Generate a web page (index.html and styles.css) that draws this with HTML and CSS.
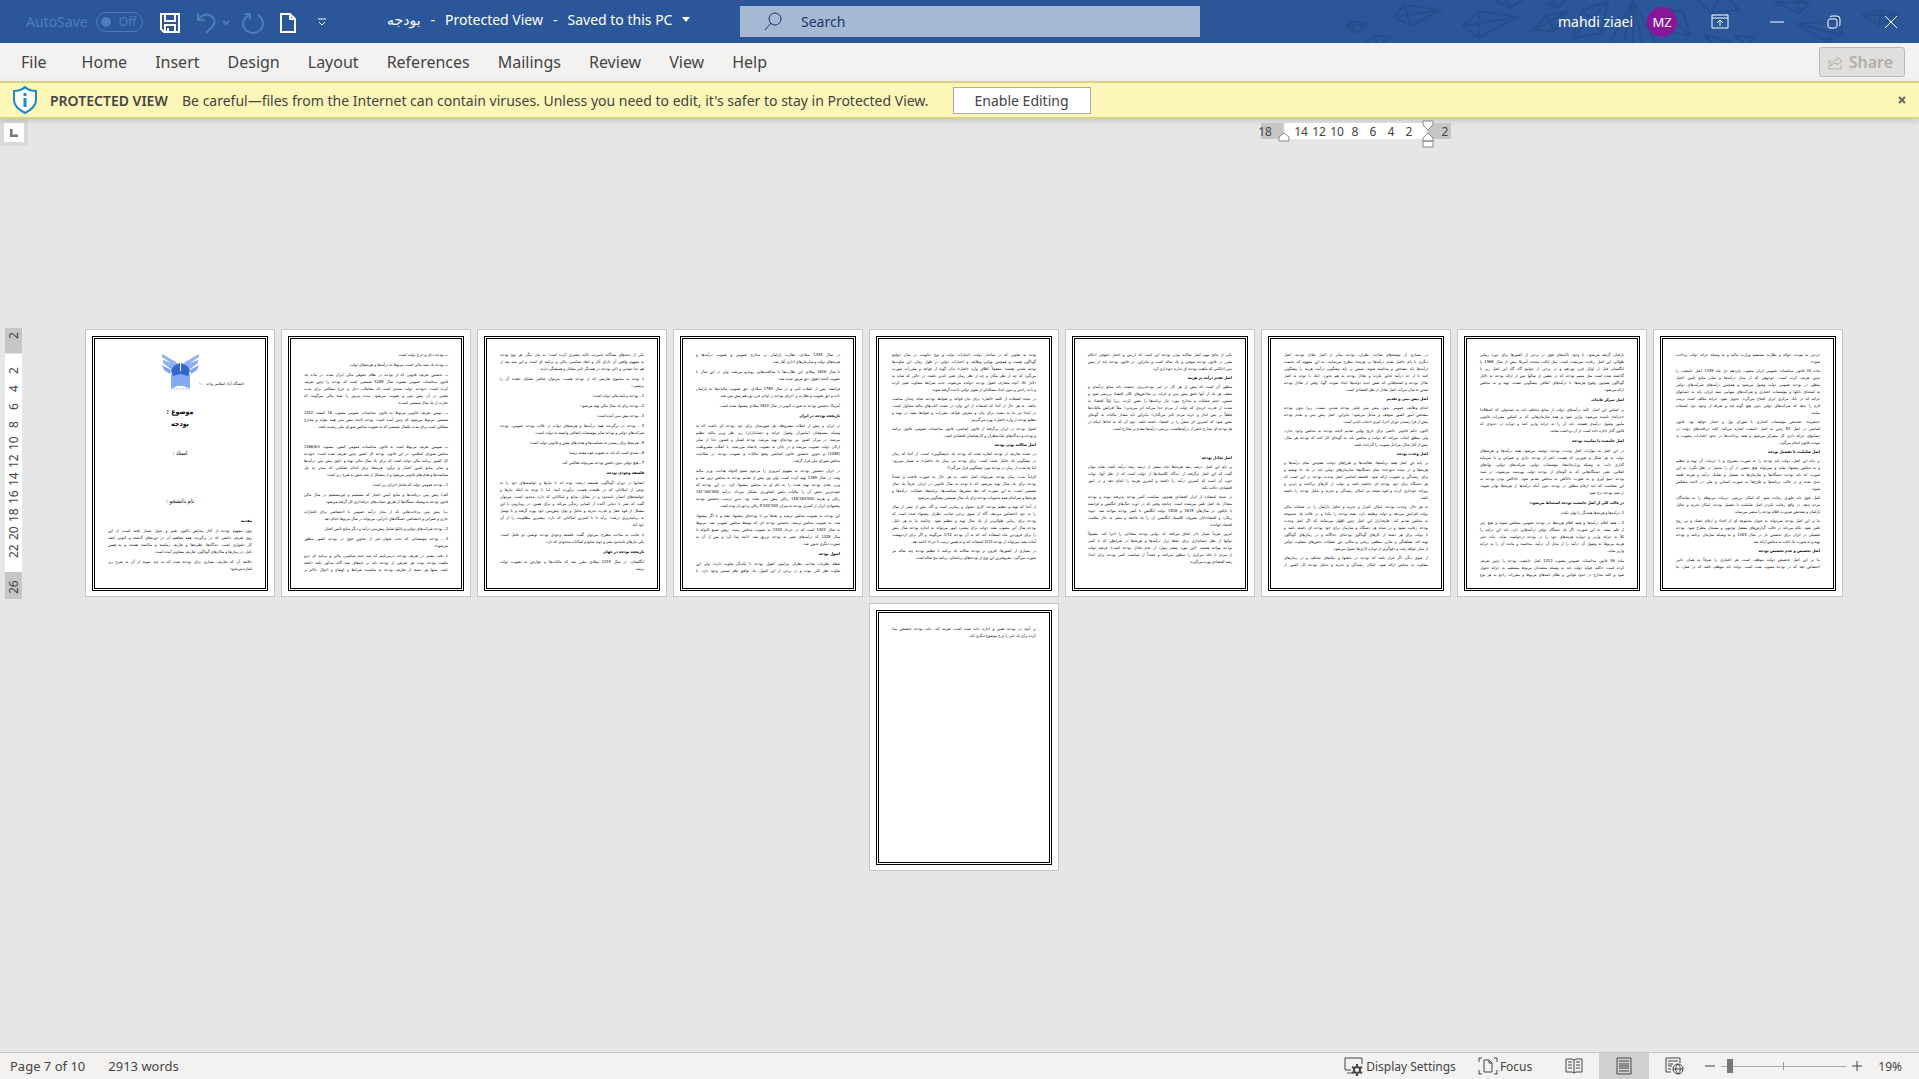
FILE: index.html
```html
<!DOCTYPE html>
<html lang="en">
<head>
<meta charset="utf-8">
<title>بودجه - Protected View</title>
<link rel="stylesheet" href="styles.css">
</head>
<body>
<header class="titlebar">
  <svg class="art" width="560" height="43" viewBox="0 0 560 43" aria-hidden="true">
    <path d="M6 27L11 21L29 24L15 33ZM11 21L15 33M6 27L29 24M54 17L64 5L101 10L71 26ZM64 5L71 26M54 17L101 10M123 26L139 11L177 17L139 38ZM139 11L139 38M123 26L177 17M26 43L34 35L52 37L41 43M34 35L37 43M154 0L170 8L183 0M166 0L170 8M207 3L217 8L226 0M212 0L217 8M193 30L206 16L227 12L214 31ZM206 16L214 31M193 30L227 12M232 38L243 10L268 1L262 33ZM243 10L262 33M232 38L268 1M270 43L293 0L316 43M284 43L293 0L302 43M293 0V43M320 8L343 12L350 36L325 30ZM320 8L350 36M357 0L372 13L400 10L389 0M372 13L378 0M363 34L392 43M363 34L372 43M394 36L414 37L408 43M394 36L404 43M434 2L459 13L469 3L455 0M434 2L469 3M457 0L459 13M457 24L501 21L502 35L486 41ZM501 21L486 41M457 24L502 35M523 15L541 10L559 15L539 25ZM541 10L539 25M523 15H559"/>
  </svg>
  <div class="quick">
    <label class="autosave"><span>AutoSave</span>
      <button class="toggle" type="button" disabled><i></i>Off</button></label>
    <button class="icon save" type="button" aria-label="Save"><svg width="20" height="20" viewBox="0 0 20 20"><path d="M1 1H19V19H4L1 16ZM5 1V8H15V1M5 19V12H15V19M8 19V15"/></svg></button>
    <button class="icon dim undo" type="button" aria-label="Undo"><svg width="34" height="22" viewBox="0 0 34 22"><path d="M2 1V8H9M2 8C6 3 10 2 13 3C19 5 20 11 16 15L10 21M27 9L30 12L33 9"/></svg></button>
    <button class="icon dim redo" type="button" aria-label="Repeat"><svg width="22" height="22" viewBox="0 0 22 22"><path d="M2 2H8V8M8 3C3 5 1 8 1 12A10 9 0 0 0 21 12C21 8 19 5 16 3"/></svg></button>
    <button class="icon new" type="button" aria-label="New"><svg width="16" height="20" viewBox="0 0 16 20"><path d="M1 1H10L15 6V19H1ZM10 1V6H15"/></svg></button>
    <button class="icon more" type="button" aria-label="Customize toolbar"><svg width="10" height="9" viewBox="0 0 10 9"><path d="M1 1H9M2 4L5 7L8 4"/></svg></button>
  </div>
  <div class="doc"><bdi>بودجه</bdi><span>-</span><span>Protected View</span><span>-</span><span>Saved to this PC</span><svg width="8" height="5" viewBox="0 0 8 5"><path d="M0 0H8L4 5Z"/></svg></div>
  <label class="search"><svg width="18" height="19" viewBox="0 0 18 19"><circle cx="11" cy="7" r="6"/><path d="M7 11L1 18"/></svg><input type="text" placeholder="Search" aria-label="Search"></label>
  <div class="account"><span>mahdi ziaei</span><span class="avatar">MZ</span></div>
  <div class="window">
    <button class="icon" type="button" aria-label="Ribbon display options"><svg width="18" height="15" viewBox="0 0 18 15"><path d="M1 1H17V14H1ZM1 4H17M9 12V6M6 9L9 6L12 9"/></svg></button>
    <button class="icon" type="button" aria-label="Minimize"><svg width="14" height="14" viewBox="0 0 14 14"><path d="M0 7H14"/></svg></button>
    <button class="icon" type="button" aria-label="Restore"><svg width="14" height="14" viewBox="0 0 14 14"><rect x="1" y="4" width="9" height="9" rx="2"/><path d="M3 2Q4 1 5 1H10Q13 1 13 4V9Q13 11 12 11"/></svg></button>
    <button class="icon" type="button" aria-label="Close"><svg width="14" height="14" viewBox="0 0 14 14"><path d="M1 1L13 13M13 1L1 13"/></svg></button>
  </div>
</header>
<nav class="tabs">
  <button type="button">File</button><button type="button">Home</button><button type="button">Insert</button><button type="button">Design</button><button type="button">Layout</button><button type="button">References</button><button type="button">Mailings</button><button type="button">Review</button><button type="button">View</button><button type="button">Help</button>
  <button class="share" type="button" disabled><svg width="15" height="15" viewBox="0 0 15 15"><path d="M3 6H1V14H13V10M3 11C3 7 6 5 9 5V2L14 6L9 10V8C6 8 4 9 3 11Z"/></svg>Share</button>
</nav>
<section class="notice">
  <svg class="shield" width="24" height="28" viewBox="0 0 24 28"><path class="edge" d="M12 1C9 4 5 5 1 5V14C1 20 6 24 12 27C18 24 23 20 23 14V5C19 5 15 4 12 1Z"/><path class="info" d="M12 7V10M12 12V21"/></svg>
  <strong>PROTECTED VIEW</strong>
  <span>Be careful—files from the Internet can contain viruses. Unless you need to edit, it's safer to stay in Protected View.</span>
  <button class="enable" type="button">Enable Editing</button>
  <button class="dismiss" type="button" aria-label="Close message"><svg width="8" height="8" viewBox="0 0 8 8"><path d="M1 1L7 7M7 1L1 7"/></svg></button>
</section>
<main class="workspace">
  <div class="topstrip">
    <button class="tabstop" type="button" aria-label="Tab stop"><svg width="8" height="8" viewBox="0 0 8 8"><path d="M1 0V7H8"/></svg></button>
    <div class="slots">
      <div class="hruler">
        <span>18</span><span></span><span>14</span><span>12</span><span>10</span><span>8</span><span>6</span><span>4</span><span>2</span><span></span><span>2</span>
        <svg class="mark left" width="12" height="10" viewBox="0 0 12 10"><path d="M1 9V5L6 1L11 5V9Z"/></svg>
        <svg class="mark right" width="12" height="28" viewBox="0 0 12 28"><path d="M1 1H11V5L6 10L1 5ZM6 13L11 18V21H1V18ZM1 21H11V27H1Z"/></svg>
      </div>
    </div>
  </div>
  <div class="stage">
    <div class="vruler"><span>2</span><span></span><span>2</span><span>4</span><span>6</span><span>8</span><span>10</span><span>12</span><span>14</span><span>16</span><span>18</span><span>20</span><span>22</span><span></span><span>26</span></div>
    <div class="pages">
      <article class="page cover" dir="rtl"><div class="frame">
        <div class="crest">
          <svg width="37" height="37" viewBox="0 0 37 37"><path fill="#8fb0f5" d="M0 0L14 8L18 14L10 16L1 9V6L9 9L0 3ZM37 0L23 8L19 14L27 16L36 9V6L28 9L37 3Z"/><path fill="#7fa4f3" d="M0 11L9 16L8 20L2 16ZM37 11L28 16L29 20L35 16Z"/><path fill="#86a9f4" d="M9 20H28V35L22 32H15L9 35Z"/><path fill="#3566d0" d="M9 17C11 11 15 10 18 9H19C22 10 26 11 28 17L26 22L19 20H18L11 22Z"/><path fill="#fff" d="M18 9H19V17H18Z"/><path stroke="#a9c0ee" d="M11 35H27" stroke-dasharray="2 1"/></svg>
          <span>دانشگاه آزاد اسلامی واحد ۱۰۰</span>
        </div>
        <h1>موضوع :</h1><h1>بودجه</h1><h2>استاد :</h2><h2 class="student">نام دانشجو :</h2>
        <h3>مقدمه</h3>
        <p><span>چون مفهوم بودجه از آغاز پیدایش تاکنون تغییر و تحول بسیار یافته است، از این</span><span>روی تعریف جامعی که در برگیرنده همه مفاهیم آن در دوره‌های گذشته و کنونی باشد</span><span>کار دشواری است. دیدگاه‌ها، نظریه‌ها و تعاریف زمانمند و مکانمند هستند و به همین</span><span>دلیل، در زمان‌ها و مکان‌های گوناگون، تعاریف متفاوتی آمده است.</span></p>
        <p><span>خلاصه آن که تعاریف بسیاری برای بودجه شده که به چند نمونه از آن به شرح زیر</span><span>اشاره می‌شود:</span></p>
      </div></article>

      <article class="page" dir="rtl"><div class="frame">
        <p><span>ـــ بودجه دخل و خرج دولت است.</span></p>
        <p><span>ـــ بودجه یك سند مالی است، مربوط به درآمدها و هزینه‌های دولت.</span></p>
        <p><span>ـــ نخستین تعریف قانونی که از بودجه در نظام حقوقی مالی ایران شده، در ماده یك</span><span>قانون محاسبات عمومی مصوب سال 1289 شمسی است که بودجه را چنین تعریف</span><span>کرده است: «بودجه دولت سندی است که معاملات دخل و خرج مملکتی برای مدت</span><span>معینی در آن پیش بینی و تصویب می‌شود. مدت مزبور را سنه مالی می‌گویند که</span><span>عبارت از یك سال شمسی است».</span></p>
        <p><span>ـــ دومین تعریف قانونی مربوط به قانون محاسبات عمومی مصوب 16 اسفند 1312</span><span>شمسی مربوط می‌شود که چنین آمده است: بودجه لایحه پیش بینی همه عواید و مخارج</span><span>مملکتی است برای مدت یکسال شمسی که به تصویب مجلس شورای ملی رسیده باشد.</span></p>
        <p class="gap"><span>ـــ سومین تعریف مربوط است به قانون محاسبات عمومی کشور، مصوب 1366/6/1</span><span>مجلس شورای اسلامی. در این قانون، بودجه کل کشور چنین تعریف شده است: «بودجه</span><span>کل کشور برنامه مالی دولت است که برای یك سال مالی تهیه و حاوی پیش بینی درآمدها</span><span>و سایر منابع تأمین اعتبار و برآورد هزینه‌ها برای انجام عملیاتی که منجر به نیل</span><span>سیاست‌ها و هدف‌های قانونی می‌شود و از متشکل از سه بخش به شرح زیر است:</span></p>
        <p><span>1 ـ بودجه عمومی دولت که شامل اجزای زیر است:</span></p>
        <p><span>الف) پیش بینی دریافت‌ها و منابع تأمین اعتبار که مستقیم و غیرمستقیم در سال مالی</span><span>قانون بودجه به وسیله دستگاه‌ها از طریق حساب‌های خزانه‌داری کل گرفته می‌شود.</span></p>
        <p><span>ب) پیش بینی پرداخت‌هایی که از محل درآمد عمومی یا اختصاصی برای اعتبارات</span><span>جاری و عمرانی و اختصاصی دستگاه‌های اجرایی، می‌تواند در سال مربوط انجام دهد.</span></p>
        <p><span>2 ـ بودجه شرکت‌های دولتی و بانکها شامل پیش‌بینی درآمد و دیگر منابع تأمین اعتبار.</span></p>
        <p><span>3 ـ بودجه مؤسساتی که تحت عنوان غیر از عناوین فوق در بودجه کشور منظور</span><span>می‌شود».</span></p>
        <p class="full"><span>با دقت بیشتر در تعریف بودجه، درمی‌یابیم که سه جنبه سیاسی، مالی و برنامه ای جزو</span><span>ماهیت بودجه بوده، هر تعریفی از بودجه باید بر پایه‌های سه گانه مذکور تکیه داشته</span><span>باشد. منتها هر دسته از تعاریف بودجه به مناسبت شرایط و اوضاع و احوال حاکم بر</span></p>
      </div></article>

      <article class="page" dir="rtl"><div class="frame">
        <p><span>یکی از جنبه‌های سه‌گانه نامبرده، تاکید بیشتری کرده است؛ به بیان دیگر، هر نوع بودجه</span><span>به مفهوم واقعی آن دارای آثار و ابعاد سیاسی، مالی و برنامه ای است و این سه بعد از</span><span>هم جدا نشدنی و ذاتی بودجه، در همدیگر تأثیر متقابل و همیشگی دارند.</span></p>
        <p><span>با توجه به مجموع تعاریفی که از بودجه هست، می‌توان عناصر تشکیل دهنده آن را</span><span>برشمرد:</span></p>
        <p><span>1 ـ بودجه برنامه مالی دولت است؛</span></p>
        <p><span>2 ـ بودجه برای یك سال مالی تهیه می‌شود؛</span></p>
        <p><span>3 ـ بودجه پیش بینی آینده است؛</span></p>
        <p><span>4 ـ بودجه در برگیرنده همه درآمدها و هزینه‌های دولت در قالب بودجه عمومی، بودجه</span><span>شرکت‌های دولتی و بودجه سایر مؤسسات انتفاعی وابسته به دولت است؛</span></p>
        <p><span>5 ـ هزینه‌ها برای رسیدن به سیاست‌ها و هدف‌های معین و قانونی دولت است؛</span></p>
        <p><span>6 ـ سندی است که باید به تصویب قوه مقننه برسد؛</span></p>
        <p><span>7 ـ هیچ دولتی بدون داشتن بودجه نمی‌تواند فعالیتی کند.</span></p>
        <h3>فلسفه وجودی بودجه</h3>
        <p><span>انسانها در دوران گوناگون، همیشه درصدد بوده اند تا نیازها و خواسته‌های خود را به</span><span>نوعی از امکاناتی که در طبیعت هست، برآورده کنند؛ اما با توجه به اینکه نیازها و</span><span>خواسته‌های انسان نامحدود و در مقابل، منابع و امکاناتی که دارد، محدود است، می‌توان</span><span>گفت که بشر با دنیایی آکنده از کمیابی زندگی می‌کند و برای همین، در رویارویی با این</span><span>مشکل از قوه عقل و قدرت تجزیه و تحلیل و توان پیش‌بینی خود بهره گرفته و با توسل</span><span>به برنامه‌ریزی درصدد برآید تا با کمترین امکاناتی که دارد، بیشترین مطلوبیت را از آن</span><span>خود کند.</span></p>
        <p><span>با عنایت به مباحث مطرح، می‌توان گفت: فلسفه وجودی بودجه نویسی دو عامل است:</span><span>یکی نیازهای نامحدود بشر و دوم، منابع و امکانات محدودی که دارد.</span></p>
        <h3>تاریخچه بودجه در جهان</h3>
        <p><span>انگلستان: در سال 1215 میلادی مقرر شد که مالیات‌ها و عوارض به تصویب دولت</span><span>برسد.</span></p>
      </div></article>

      <article class="page" dir="rtl"><div class="frame">
        <p><span>در سال 1344 میلادی، نظارت پارلمان بر مخارج عمومی و تصویب درآمدها و</span><span>هزینه‌های دولت و سازمان‌های اداری آغاز شد.</span></p>
        <p><span>تا سال 1616 میلادی این نظارت‌ها با مخالفت‌هایی روبه‌رو می‌شد، ولی در این سال با</span><span>تصویب لایحه حقوق، حق مزبور تثبیت شد.</span></p>
        <p><span>فرانسه: پس از انقلاب کبیر و در سال 1789 میلادی، حق تصویب مالیات‌ها به پارلمان</span><span>داده و حق تصویب و نظارت بر اجرای بودجه در اواخر قرن نوزدهم پیش بینی شد.</span></p>
        <p><span>آمریکا: نخستین بودجه به صورت کنونی در سال 1814 میلادی پیشنهاد شده است.</span></p>
        <h3>تاریخچه بودجه در ایران</h3>
        <p><span>در ایران و پیش از انقلاب مشروطه، هر شهرستان برای خود بودجه ای داشت که به</span><span>وسیله مستوفیان (ماموران وصول خزانه و حسابداران) زیر نظر وزیر مالیه تنظیم</span><span>می‌شد. در مرکز کشور نیز بودجه‌ای تهیه می‌شد. بودجه لشکر و قشون جدا از سایر</span><span>ارکان دولت تصویب می‌شد و در پایان به تصویب پادشاه می‌رسید. با انقلاب مشروطیت</span><span>(1285) و تدوین نخستین قانون اساسی وضع مالیات و تصویب بودجه در صلاحیت</span><span>مجلس شورای ملی قرار گرفت.</span></p>
        <p><span>در ایران نخستین بودجه به مفهوم امروزی را مرحوم صنیع الدوله هدایت، وزیر مالیه</span><span>وقت در سال 1289 تهیه کرده است، ولی وی پیش از تقدیم بودجه به مجلس ترور شد و</span><span>وزیر بعدی بودجه تهیه شده را به نام او به مجلس پیشنهاد کرد. در این بودجه که</span><span>عمده‌ترین بخش آن را مالیات بخش کشاورزی تشکیل می‌داد، درآمد 141٬160٬000</span><span>ریالی و هزینه 146٬180٬000 ریالی پیش بینی شده بود. بدین ترتیب، نخستین بودجه</span><span>پیشنهادی ایران از کسری بودجه به میزان 5٬020٬000 ریالی برخوردار بوده است.</span></p>
        <p><span>این بودجه به تصویب مجلس نرسید و بعدها نیز یا بودجه‌ای پیشنهاد نشد و یا اگر پیشنهاد</span><span>شد، به تصویب مجلس نرسید. نخستین بودجه ای که توسط مجلس تصویب شد، مربوط</span><span>به سال 1302 است که در خرداد 1302 به تصویب مجلس رسید. روش صنیع الدوله تا</span><span>سال 1328 که درآمدهای نفتی به بودجه تزریق شد، ادامه پیدا کرد و پس از آن به</span><span>صورت دیگری تدوین شد.</span></p>
        <h3>اصول بودجه</h3>
        <p class="full"><span>نقطه نظریات صاحب نظران پیرامون اصول بودجه با یکدیگر تفاوت دارند، ولی این</span><span>تفاوت نظر کلی نبوده و در برخی از این اصول، یك توافق نظر ضمنی وجود دارد. با</span></p>
      </div></article>

      <article class="page tight" dir="rtl"><div class="frame">
        <p><span>توجه به تفاوتی که در ساختار دولت، اختیارات دولت و نوع حکومت در میان جوامع</span><span>گوناگون هست و همچنین پویایی وظایف و اختیارات دولتی در طول زمان، این تفاوت‌ها</span><span>توجیه شدنی هستند. معمولاً اطلاق واژه «اصل» بدان گونه از قواعد و مقررات صورت</span><span>می‌گیرد که چه از نظر مکان و چه از نظر زمان تغییر ناپذیر باشند. در حالی که شاید به</span><span>دلایل بالا، آنچه متعارف اصول بودجه خوانده می‌شوند، تحت شرایط متفاوت تغییر کرده</span><span>و یا به راحتی و بدون ایجاد مسأله‌ای از سوی دولتی نادیده گرفته شوند.</span></p>
        <p><span>در نتیجه استفاده از کلمه «اصل» برای بیان قواعد و ضوابط بودجه، شاید چندان مناسب</span><span>نباشد. به هر حال از آنجا که استفاده از این واژه در عمده کتاب‌های مالیه متداول است،</span><span>در اینجا نیز ما به تبعیت برای بیان و معرفی قواعد، مقررات و ضوابط مقید در تهیه و</span><span>تنظیم بودجه از واژه «اصل» بهره می‌گیریم.</span></p>
        <p><span>اصول بودجه در ایران برگرفته از قانون اساسی، قانون محاسبات عمومی، قانون برنامه</span><span>و بودجه و دیدگاه‌های صاحبنظران و کارشناسان اقتصادی است.</span></p>
        <h3>اصل سالانه بودن بودجه</h3>
        <p><span>در عمده تعاریف از بودجه اشاره شده که بودجه یك «پیشگویی» است. از آنجا که زمان</span><span>در پیشگویی یك عامل عمده است، برای بودجه نیز زمان یك «اصل» به شمار می‌رود؛</span><span>اما چه مدت از زمان در بودجه مورد پیشگویی قرار می‌گیرد؟</span></p>
        <p><span>الزاماً مدت زمان بودجه نمی‌تواند اصل باشد. به هر حال به صورت قاعده و عمدتاً</span><span>بودجه برای یك سال تهیه می‌شود که با توجه به سال قانونی در ایران، عرفاً یك سال</span><span>شمسی است. به این صورت که خط مشی‌ها، سیاست‌ها، برنامه‌ها، عملیات، درآمدها و</span><span>هزینه‌ها و سرانجام همه محتویات بودجه برای یك سال شمسی پیشگویی می‌شود.</span></p>
        <p><span>از آنجا که تهیه و تنظیم بودجه، کاری دشوار و زمان‌بر است و گاه بیش از نیمی از سال</span><span>را به خود اختصاص می‌دهد، گاه از سوی برخی صاحب نظران پیشنهاد شده است که</span><span>بودجه برای زمانی طولانی‌تر از یك سال تهیه و تنظیم شود. چنانچه بنا به هر دلیل،</span><span>بودجه سال آتی مصوب نشد، دولت برای پیشبرد امور می‌تواند به اندازه بودجه سال پیش</span><span>را برای فروردین ماه استفاده کند که به آن بودجه 1/12 می‌گویند و اگر برای اردیبهشت</span><span>آماده نشد، می‌تواند از بودجه 2/12 استفاده کند و به همین ترتیب تا خرداد ادامه دهد.</span></p>
        <p><span>در بسیاری از کشورها، افزون بر بودجه سالانه یك برنامه با تنظیم بودجه چند ساله نیز</span><span>صورت می‌گیرد. معروفترین این نوع از بودجه‌های برنامه‌ای، برنامه پنج ساله است.</span></p>
      </div></article>

      <article class="page tight" dir="rtl"><div class="frame">
        <p><span>یکی از نتایج مهم اصل سالانه بودن بودجه این است که ارزش و اعتبار حقوقی احکام</span><span>مقرر در قانون بودجه موقتی و یك ساله است و بنابراین، در قانون بودجه باید از پیش</span><span>بینی احکامی که ماهیت بودجه ای ندارند خودداری کرد.</span></p>
        <h3>اصل تقدم درآمد بر هزینه</h3>
        <p><span>منظور آن است که پیش از هر کار در امر بودجه‌ریزی، نخست باید منابع درآمدی و</span><span>سقف هر یك از آنها دقیق پیش بینی و اثرات بر شاخص‌های کلان اقتصاد بررسی شود و</span><span>سپس، حجم عملیات و مخارج مورد نیاز برنامه‌ها را معین کرده، زیرا اولاً اقتصاد به</span><span>شدت از قدرت خریدی که دولت از مردم جدا می‌کند اثر می‌پذیرد؛ مثلاً افزایش مالیات‌ها</span><span>قطعاً بر پس انداز و خرید مردم تأثیر می‌گذارد؛ بنابراین باید مقدار مالیات به گونه‌ای</span><span>معین شود که کمترین اثر منفی را بر اقتصاد داشته باشد. دوم آن که به لحاظ اینکه در</span><span>هر بودجه ای مخارج تابعی از درآمدهاست، بررسی درآمدها مقدم بر مخارج است.</span></p>
        <h3 class="gap2">اصل تعادل بودجه</h3>
        <p><span>بر پایه این اصل، درصد رشد هزینه‌ها نباید بیشتر از درصد رشد درآمد باشد. شاید بتوان</span><span>گفت که این اصل برگرفته از دیدگاه کلاسیك‌ها از دولت است که از نظر آنها، دولت</span><span>خوب آن است که کمترین درآمد را داشته و کمترین هزینه را انجام دهد و در امور</span><span>اقتصادی دخالت نکند.</span></p>
        <p><span>در نتیجه استفاده از ابزار اقتصادی همچون سیاست کسر بودجه پذیرفته نبوده و بودجه</span><span>متعادل یك اصل تلقی می‌شده است. چنانچه وقتی که در دوره جنگ‌های انگلیس و فرانسه</span><span>با ناپلئون در سال‌های 1815 و 1816 دولت انگلیس با کسر بودجه مواجه شد، دیوید</span><span>ریکارد و اقتصاددانان معروف کلاسیك انگلیسی آن را یك فاجعه و مضر به حال سلامت</span><span>اقتصاد خواندند.</span></p>
        <p><span>امروز تقریباً بسیار نادر اتفاق می‌افتد که دولتی بودجه متعادلی را اجرا کند. معمولاً</span><span>دولتها از نظر حسابداری برای حفظ تراز درآمدها و هزینه‌ها در شرایطی که با کسر</span><span>بودجه مواجه هستند. (این مورد بیشتر موارد از عدم تعادل بودجه است)، قرضه دولت</span><span>از مردم یا بانك مرکزی را منظور می‌کنند و عمدتاً از سیاست کسر بودجه برای ایجاد</span><span>رشد اقتصادی بهره می‌گیرند.</span></p>
      </div></article>

      <article class="page tight" dir="rtl"><div class="frame">
        <p><span>در بسیاری از نوشته‌های صاحب نظران، بودجه متأثر از اصل تعادل بودجه، اصل</span><span>دیگری با نام «اصل تقدم درآمدها بر هزینه» مطرح می‌نمایند. به این مفهوم که نخست</span><span>درآمدها باید مشخص و محاسبه شوند، سپس بر پایه پیشگویی درآمد، هزینه را پیشگویی</span><span>کنند تا از حد درآمد تجاوز نکرده و تعادل بودجه به هم نخورد. اینك با توجه به اصل</span><span>تعادل بودجه و استثناهایی که نقش جدید دولت‌ها ایجاد نموده، گویا، وقتی از تعادل بودجه</span><span>سخن به میان می‌آید، اصل تعادل از نظر اقتصادی است.</span></p>
        <h3>اصل پیش بینی و تقدیم</h3>
        <p><span>انجام وظایف عمومی بدون پیش بینی قبلی بودجه شدنی نیست، زیرا بدون بودجه</span><span>مشخص امور کشور متوقف و مختل می‌شود؛ بنابراین، اصل پیش بینی و تقدم بودجه</span><span>پیش از فرا رسیدن دوران اجرا، امری اجتناب ناپذیر است.</span></p>
        <p><span>اکنون حکم قانونی خاصی برای تاریخ نهایی تقدیم لایحه بودجه به مجلس وجود ندارد،</span><span>ولی منطق ایجاب می‌کند که دولت و مجلس باید به گونه‌ای کار کنند که بودجه هر سال،</span><span>پیش از آغاز سال، مراحل تصویب را گذرانده باشد.</span></p>
        <h3>اصل وحدت بودجه</h3>
        <p><span>بر پایه این اصل همه برنامه‌ها، فعالیت‌ها و طرح‌های دولت، همچنین تمام درآمدها و</span><span>هزینه‌ها و در نتیجه «بودجه» تمام دستگاه‌ها، سازمان‌های دولتی باید در یك جا نوشته و</span><span>برای رسیدگی و تصویب ارائه شود. فلسفه اساسی اصل وحدت بودجه در این است که</span><span>هر دستگاه برای خود بودجه ای نداشته باشد و دولت از کارهای پراکنده و حزبی و</span><span>روزانه خودداری کرده و قوه مقننه نیز امکان رسیدگی و تجزیه و تحلیل بودجه را داشته</span><span>باشد.</span></p>
        <p><span>به هر حال، وحدت بودجه، امکان کنترل و تجزیه و تحلیل پارلمان را در عملیات مالی</span><span>دولت افزایش می‌دهد و دولت وظیفه دارد، همه بودجه را یکجا و در غالب یك مجموعه</span><span>به مجلس تقدیم کند. طرفداران این اصل چنین اظهار می‌نمایند که اگر اصل وحدت</span><span>بودجه رعایت نشود و در نتیجه هر دستگاه و سازمان برای خود بودجه ای داشته باشد و</span><span>یا دولت برای هر دسته از کارهای گوناگون بودجه‌ای جداگانه و در زمان‌های گوناگون</span><span>تهیه کند، هماهنگی و تقارن منطقی زمانی و مکانی بین عملیات بخش‌های متفاوت دولتی</span><span>از میان خواهد رفت و جلوگیری از دوباره کاری‌ها دشوار می‌شود.</span></p>
        <p class="full"><span>از سوی دیگر، اگر قرار باشد که بودجه در بخشها و تیکه‌های مختلف و در زمان‌های</span><span>متفاوت به مجلس ارائه شود، امکان رسیدگی و تجزیه و تحلیل بودجه کل کشور از</span></p>
      </div></article>

      <article class="page" dir="rtl"><div class="frame">
        <p><span>پارلمان گرفته می‌شود. با وجود تأکیدهای فوق در برخی از کشورها برای دوره زمانی</span><span>طولانی این اصل رعایت نمی‌شده است؛ مثل ایالت متحده آمریکا پیش از سال 1968 یا</span><span>انگلستان قبل از اوایل قرن نوزدهم و در برخی از جوامع گاه گاه این اصل زیر پا</span><span>گذاشته شده است مثل متمم بودجه که در بعضی از سالها پس از ارائه بودجه به دلایل</span><span>گوناگون همچون وقوع هزینه‌ها یا درآمدهای اتفاقی پیشگویی نشده، تهیه و به مجلس</span><span>ارائه می‌شود.</span></p>
        <h3>اصل تمرکز عایدات</h3>
        <p><span>بر اساس این اصل، کلیه درآمدهای دولت از منابع مختلف باید به صندوقی که اصطلاحا</span><span>«خزانه» نامیده می‌شود، واریز شود و همه سازمان‌هایی که بر اساس مقررات قانونی</span><span>مأمور وصول درآمدی هستند، باید آن را به خزانه واریز کنند و دوباره در حدودی که</span><span>قانون گذار اجازه داده است، از آن برداشت نمایند.</span></p>
        <h3>اصل جامعیت یا تمامیت بودجه</h3>
        <p><span>در این اصل به موازات اصل وحدت بودجه، توصیه می‌شود همه درآمدها و هزینه‌های</span><span>دولت به هر شکل و صورتی که هست، اعم از بودجه جاری و عمرانی و یا سرمایه</span><span>گذاری ثابت به وسیله وزارتخانه‌ها، مؤسسات دولتی، شرکت‌های دولتی، نهادهای</span><span>انقلابی، یعنی دستگاه‌هایی که به گونه‌ای از بودجه دولت بهره‌مند می‌شوند، در سند</span><span>بودجه جمع آوری و به صورت ناخالص به مجلس تقدیم شود. ناخالص بودن بودجه به</span><span>این معناست که باید ارقام منظور در بودجه بدون آنکه درآمدها از هزینه‌ها تهاتر شوند،</span><span>در سند بودجه درج شود.</span></p>
        <h3>در حالت کلی از اصل جامعیت بودجه استنباط می‌شود:</h3>
        <p><span>1ـ درآمدها و هزینه‌ها همدیگر را تهاتر نکنند.</span></p>
        <p><span>2 ـ همه اقلام درآمدها و همه اقلام هزینه‌ها در بودجه عمومی منعکس شوند و هیچ چیز</span><span>از قلم نیفتد. به این صورت، اگر یك دستگاه دولتی درآمدهایی دارد، باید این درآمد را</span><span>کلاً به خزانه واریز و دوباره هزینه‌های خود را در بودجه درخواست نماید. نباید حتی</span><span>هزینه مربوط به وصول آن درآمد را از محل آن درآمد، محاسبه و مانده آن را به خزانه</span><span>واریز نماید.</span></p>
        <p class="full"><span>ماده 36 قانون محاسبات عمومی مصوب 1312 اصل جامعیت بودجه را چنین تعریف</span><span>کرده است: «کلیه عواید دولت باید به وسیله متصدیان مربوط مستقیم به خزانه تحویل</span><span>شود و کلیه مخارج در حدود قوانین و نظام نامه‌های مربوط و مقررات راجع به هر نوع</span></p>
      </div></article>

      <article class="page tight" dir="rtl"><div class="frame">
        <p><span>خرجی به موجب حواله و نظارت مستقیم وزارت مالیه و به وسیله خزانه دولت پرداخت</span><span>شود».</span></p>
        <p><span>ماده 33 قانون محاسبات عمومی ایران مصوب پانزدهم دی ماه 1349 اصل جامعیت را</span><span>چنین تعریف کرده است: «وجوهی که از محل درآمدها و سایر منابع تأمین اعتبار</span><span>منظور در بودجه عمومی دولت وصول می‌شود و همچنین درآمدهای شرکت‌های دولتی</span><span>به استثنای بانکها و مؤسسات اعتباری و شرکت‌های سهامی بیمه ایران، باید به حسابهای</span><span>خزانه که در بانك مرکزی ایران افتتاح می‌گردد، تحویل شود. خزانه مکلف است ترتیب</span><span>لازم را بدهد که شرکت‌های دولتی بدون هیچ گونه قید و شرط از وجوه خود استفاده</span><span>نمایند.</span></p>
        <p><span>«تبصره»: تشخیص مؤسسات اعتباری با شورای پول و اعتبار خواهد بود. قانون</span><span>اساسی در اصل 53 چنین به اصل جامعیت اشاره می‌کند: کلیه دریافت‌های دولت در</span><span>حسابهای خزانه داری کل متمرکز می‌شود و همه پرداخت‌ها در حدود اعتبارات مصوب به</span><span>موجب قانون انجام می‌گیرد.</span></p>
        <h3>اصل شاملیت یا تفصیل بودجه</h3>
        <p><span>بر پایه این اصل، دولت باید بودجه را به صورت مشروح و با جزییات آن تهیه و تنظیم</span><span>و به مجلس پیشنهاد نماید و نمی‌تواند هیچ بخشی از آن را مجمل در نظر بگیرد. به این</span><span>صورت که باید بودجه دستگاه‌ها و سازمان‌ها به تفصیل و تفکیك درآمد و هزینه طبقه</span><span>بندی شده و در قالب برنامه‌ها و طرح‌ها به صورت استانی و ملی در لایحه منعکس</span><span>شوند.</span></p>
        <p><span>اصل فوق باید طوری رعایت شود که امکان بررسی جزییات مربوطه را به نمایندگان</span><span>مردم بدهد. در واقع رعایت نکردن اصل شاملیت یا تفصیل بودجه، امکان تجزیه و تحلیل</span><span>پارلمان و تشخیص ضرورت اقلام بودجه را منتفی می‌نماید.</span></p>
        <p><span>بنا بر این اصل بودجه نمی‌تواند به عنوان مجموعه ای از اعداد و ارقام خشك و بی روح</span><span>تلقی شود، بلکه می‌باید در قالب گزارش‌های مفصل توجیهی و مستدل مطرح شود. بودجه</span><span>تفصیلی در ایران برای نخستین بار در سال 1344 و به وسیله سازمان برنامه و بودجه</span><span>تهیه و به صورت یك کتاب به مجلس ارائه شد.</span></p>
        <h3>اصل تخصیص و عدم تخصیص بودجه</h3>
        <p class="full"><span>بنا بر این اصل تخصیص دولت موظف است، هر اعتباری را صرفاً به همان جایی</span><span>اختصاص دهد که در بودجه مصوب شده است. دولت باید موظف باشد که در عمل، بنا</span></p>
      </div></article>

      <article class="page" dir="rtl"><div class="frame">
        <p><span>بر آنچه در بودجه تعیین و اجازه داده شده است، هزینه کند. نباید بودجه تخصیص پیدا</span><span>کرده برای یك امر را خرج موضوع دیگری کند.</span></p>
      </div></article>
    </div>
  </div>
</main>
<footer class="status">
  <span class="count">Page 7 of 10</span><span class="count">2913 words</span>
  <button class="tool display" type="button"><svg width="20" height="20" viewBox="0 0 20 20"><path d="M7 14H1V2H18V8M3 17H8"/><circle cx="13" cy="14" r="3" stroke-width="2"/><path d="M13 8V10M13 18V20M8 11L10 12M16 16L18 17M8 17L10 16M16 12L18 11" stroke-width="2"/></svg>Display Settings</button>
  <button class="tool focus" type="button"><svg width="20" height="18" viewBox="0 0 20 18"><path d="M4 1H1V5M16 1H19V5M4 17H1V13M16 17H19V13M6 3H11L14 6V15H6ZM11 3V6H14"/></svg>Focus</button>
  <button class="tool view" type="button" aria-label="Read mode"><svg width="18" height="16" viewBox="0 0 18 16"><path d="M9 2L7 1H1V14H7L9 15L11 14H17V1H11ZM9 2V15M3 4H7M3 7H7M3 10H7M11 4H15M11 7H15M11 10H15"/></svg></button>
  <button class="tool view on" type="button" aria-label="Print layout"><svg width="16" height="18" viewBox="0 0 16 18"><path d="M1 1H15V17H1ZM3 4H13M3 7H13M3 9H13M3 11H13M3 14H13"/></svg></button>
  <button class="tool view" type="button" aria-label="Web layout"><svg width="19" height="18" viewBox="0 0 19 18"><path d="M6 15H1V1H15V6M3 4H13M3 7H8M3 9H7M3 12H6"/><circle cx="13" cy="12" r="5"/><path d="M8 12H18M13 7C10 10 10 14 13 17C16 14 16 10 13 7"/></svg></button>
  <button class="tool step" type="button" aria-label="Zoom out"><svg width="10" height="10" viewBox="0 0 10 10"><path d="M0 5H10"/></svg></button>
  <input class="zoom" type="range" min="0" max="100" value="5" aria-label="Zoom">
  <button class="tool step" type="button" aria-label="Zoom in"><svg width="10" height="10" viewBox="0 0 10 10"><path d="M0 5H10M5 0V10"/></svg></button>
  <span class="percent">19%</span>
</footer>
</body>
</html>
```
FILE: styles.css
```css
* { box-sizing: border-box; }
body {
  margin: 0;
  min-height: 100vh;
  display: flex;
  flex-direction: column;
  background: #e6e6e6;
  color: #444;
  font-family: "Noto Sans", "Open Sans", "DejaVu Sans", sans-serif;
  font-size: 14px;
}
button { border: 0; padding: 0; margin: 0; background: none; color: inherit; font: inherit; }
svg { display: block; flex: none; fill: none; stroke: currentColor; }

/* title bar */
.titlebar {
  position: relative;
  height: 43px;
  display: flex;
  align-items: center;
  background: #2b579a;
  color: #fff;
  font-size: 14px;
}
.art { position: absolute; right: 19px; top: 0; stroke: #254e8b; stroke-width: 2; }
.quick { display: flex; align-items: center; padding-left: 26px; width: 387px; color: #fff; }
.autosave { display: flex; align-items: center; gap: 8px; color: #4d7cba; margin-right: 17px; }
.toggle { display: flex; align-items: center; gap: 8px; width: 47px; height: 20px; padding-left: 4px; border: 1px solid #4d7cba; border-radius: 10px; font-size: 12px; }
.toggle i { width: 10px; height: 10px; border-radius: 50%; background: #4d7cba; }
.icon { display: flex; align-items: center; justify-content: center; stroke-width: 1; }
.save, .new { stroke-width: 2; }
.save { margin-right: 16px; }
.quick .icon { margin-top: 2px; }
.dim { color: #4d7cba; stroke-width: 2; }
.undo { margin-right: 12px; }
.redo { margin-right: 16px; }
.new { margin-right: 21px; }
.doc { display: flex; align-items: center; gap: 10px; width: 353px; height: 39px; align-self: flex-start; white-space: nowrap; }
.doc svg { fill: #fff; stroke: none; }
.search { display: flex; align-items: center; gap: 19px; width: 460px; height: 31px; padding-left: 24px; background: #a5b9d3; color: #17376b; }
.search input { flex: 1; min-width: 0; border: 0; padding: 0; background: none; font: inherit; color: #17376b; }
.search input::placeholder { color: #17376b; opacity: 1; }
.account { display: flex; align-items: center; gap: 14px; margin-left: auto; position: relative; }
.avatar { display: grid; place-items: center; width: 30px; height: 30px; border-radius: 50%; background: #881798; font-size: 13px; }
.window { display: flex; position: relative; margin-left: 14px; }
.window .icon { width: 57px; height: 43px; }

/* ribbon tabs */
.tabs { display: flex; align-items: center; height: 38px; padding: 0 14px 0 7px; background: #f3f2f1; font-size: 16px; }
.tabs button { padding: 0 14px; }
.tabs button:first-child { margin-right: 7px; }
.tabs .share { display: flex; align-items: center; gap: 6px; margin-left: auto; height: 30px; padding: 0 11px 0 8px; border: 1px solid #bbb8b5; border-radius: 3px; background: #e1dfdd; color: #b1aeab; font-weight: 600; }

/* protected view message */
.notice { display: flex; align-items: center; height: 38px; padding: 0 13px; background: #fcf7b6; border-top: 2px solid #d6d28c; border-bottom: 2px solid #d6d28c; box-shadow: 0 2px 6px #0002; position: relative; white-space: nowrap; }
.shield { margin-right: 13px; }
.edge { fill: #fff; stroke: #1e8bcd; stroke-width: 2; }
.info { stroke: #1e8bcd; stroke-width: 3; }
.notice strong { font-weight: 600; margin-right: 12px; min-width: 120px; }
.enable { width: 138px; height: 27px; margin-left: 24px; background: #fff; border: 1px solid #ababab; }
.dismiss { margin-left: auto; stroke-width: 2; color: #666; }

/* document area */
.workspace { flex: 1; display: flex; flex-direction: column; }
.topstrip { display: flex; height: 29px; padding-right: 19px; }
.tabstop { width: 28px; height: 27px; border: 4px solid #dadada; background: #fff; display: grid; place-items: center; color: #777; }
.tabstop svg { stroke-width: 3; }
.slots { flex: 1; display: grid; grid-template-columns: repeat(9, 190px); gap: 6px; justify-content: center; }
.hruler {
  grid-column: 7;
  position: relative;
  display: grid;
  grid-template-columns: repeat(11, 18px);
  justify-content: center;
  height: 16px;
  padding-right: 2px;
  margin-top: 4px;
  line-height: 18px;
  text-align: center;
  font-size: 12px;
  background: linear-gradient(90deg, #c6c6c6 22px, #fff 24px, #fff 166px, #c6c6c6 166px);
}
.mark { position: absolute; fill: #fff; stroke: #888; }
.mark.left { left: 17px; top: 9px; }
.mark.right { left: 161px; top: -3px; }
.stage { display: flex; margin: auto 0; padding-right: 19px; }
.vruler {
  width: 17px;
  height: 271px;
  margin: -1px 6px 0 5px;
  flex: none;
  display: flex;
  flex-direction: column;
  font-size: 12px;
  background: linear-gradient(#c6c6c6 25px, #fff 26px, #fff 244px, #c6c6c6 244px);
}
.vruler span { flex: none; height: 18px; line-height: 17px; width: 17px; text-align: center; writing-mode: vertical-rl; transform: rotate(180deg); }
.vruler span:first-child { height: 16px; }
.pages { flex: 1; display: flex; flex-wrap: wrap; justify-content: center; gap: 6px; }
.page { width: 190px; height: 268px; padding: 6px; background: #fff; border: 1px solid #c6c6c6; }
.frame { height: 255px; border: 3px double #000; padding: 12px 13px 0; font-family: "DejaVu Sans Condensed", "DejaVu Sans", sans-serif; font-size: 4px; line-height: 7px; color: #000; }
.frame p { margin: 0 0 3px; }
.frame span { display: block; text-align: justify; text-align-last: justify; }
.frame p:not(.full) span:last-child { text-align-last: start; }
.frame h3 { margin: 0 0 3px; font-size: 4px; line-height: 7px; font-weight: 700; }
.tight p, .tight h3 { margin-bottom: 2px; }
.frame .gap { margin-top: 13px; }
.frame .gap2 { margin-top: 22px; }
.crest { display: flex; align-items: flex-end; padding-left: 54px; margin-top: 3px; direction: ltr; }
.crest svg { stroke: none; }
.crest span { padding-bottom: 3px; font-size: 4px; line-height: 8px; direction: rtl; white-space: nowrap; }
.cover h1, .cover h2 { margin: 0; text-align: center; font-size: 7px; line-height: 12px; }
.cover h1:nth-of-type(1) { margin-top: 15px; }
.cover h2 { margin-top: 17px; font-weight: 400; font-size: 6px; }
.cover .student { margin: 36px 0 10px; }

/* status bar */
.status { display: flex; align-items: center; height: 27px; padding: 0 17px 0 10px; background: #f3f2f1; border-top: 1px solid #c8c6c4; font-size: 13px; white-space: nowrap; }
.count { margin-right: 23px; }
.tool { display: flex; align-items: center; gap: 2px; font-size: 12px; }
.display { margin-left: auto; margin-right: 22px; }
.focus { margin-right: 17px; }
.view { width: 50px; height: 26px; justify-content: center; }
.view.on { background: #d2d0ce; }
.step { margin: 0 6px; }
.zoom { appearance: none; width: 125px; height: 20px; margin: 0; background: linear-gradient(#999, #999) 50% 50% / 1px 8px no-repeat, linear-gradient(#aaa, #aaa) 0 50% / 100% 1px no-repeat; }
.zoom::-webkit-slider-thumb { appearance: none; width: 6px; height: 14px; background: #777; }
.percent { margin-left: 10px; font-size: 12px; }
```
